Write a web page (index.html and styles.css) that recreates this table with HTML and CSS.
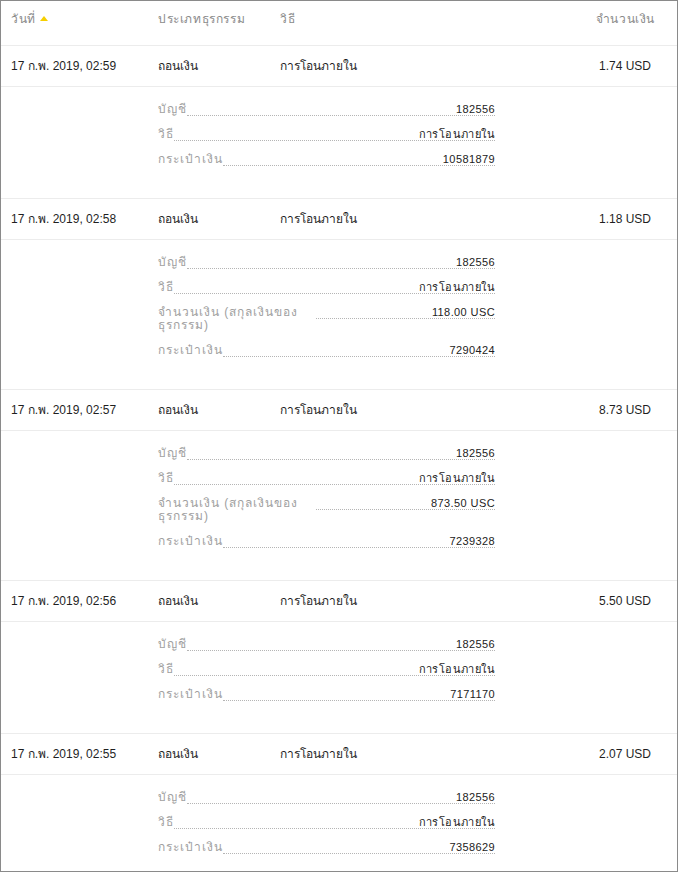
FILE: index.html
```html
<!DOCTYPE html>
<html lang="th">
<head>
<meta charset="utf-8">
<title>ประวัติธุรกรรม</title>
<link rel="stylesheet" href="styles.css">
</head>
<body>
<div class="frame">
  <div class="head">
    <div class="c-date">วันที่<span class="sort"></span></div>
    <div class="c-type">ประเภทธุรกรรม</div>
    <div class="c-method">วิธี</div>
    <div class="c-amount">จำนวนเงิน</div>
  </div>

  <div class="row">
    <div class="c-date">17 ก.พ. 2019, 02:59</div>
    <div class="c-type">ถอนเงิน</div>
    <div class="c-method">การโอนภายใน</div>
    <div class="c-amount">1.74 USD</div>
  </div>
  <div class="detail">
    <div class="list">
      <div class="item"><div class="lbl">บัญชี</div><div class="val">182556</div></div>
      <div class="item"><div class="lbl">วิธี</div><div class="val">การโอนภายใน</div></div>
      <div class="item"><div class="lbl">กระเป๋าเงิน</div><div class="val">10581879</div></div>
    </div>
  </div>

  <div class="row">
    <div class="c-date">17 ก.พ. 2019, 02:58</div>
    <div class="c-type">ถอนเงิน</div>
    <div class="c-method">การโอนภายใน</div>
    <div class="c-amount">1.18 USD</div>
  </div>
  <div class="detail">
    <div class="list">
      <div class="item"><div class="lbl">บัญชี</div><div class="val">182556</div></div>
      <div class="item"><div class="lbl">วิธี</div><div class="val">การโอนภายใน</div></div>
      <div class="item"><div class="lbl wrap">จำนวนเงิน (สกุลเงินของธุรกรรม)</div><div class="val">118.00 USC</div></div>
      <div class="item"><div class="lbl">กระเป๋าเงิน</div><div class="val">7290424</div></div>
    </div>
  </div>

  <div class="row">
    <div class="c-date">17 ก.พ. 2019, 02:57</div>
    <div class="c-type">ถอนเงิน</div>
    <div class="c-method">การโอนภายใน</div>
    <div class="c-amount">8.73 USD</div>
  </div>
  <div class="detail">
    <div class="list">
      <div class="item"><div class="lbl">บัญชี</div><div class="val">182556</div></div>
      <div class="item"><div class="lbl">วิธี</div><div class="val">การโอนภายใน</div></div>
      <div class="item"><div class="lbl wrap">จำนวนเงิน (สกุลเงินของธุรกรรม)</div><div class="val">873.50 USC</div></div>
      <div class="item"><div class="lbl">กระเป๋าเงิน</div><div class="val">7239328</div></div>
    </div>
  </div>

  <div class="row">
    <div class="c-date">17 ก.พ. 2019, 02:56</div>
    <div class="c-type">ถอนเงิน</div>
    <div class="c-method">การโอนภายใน</div>
    <div class="c-amount">5.50 USD</div>
  </div>
  <div class="detail">
    <div class="list">
      <div class="item"><div class="lbl">บัญชี</div><div class="val">182556</div></div>
      <div class="item"><div class="lbl">วิธี</div><div class="val">การโอนภายใน</div></div>
      <div class="item"><div class="lbl">กระเป๋าเงิน</div><div class="val">7171170</div></div>
    </div>
  </div>

  <div class="row">
    <div class="c-date">17 ก.พ. 2019, 02:55</div>
    <div class="c-type">ถอนเงิน</div>
    <div class="c-method">การโอนภายใน</div>
    <div class="c-amount">2.07 USD</div>
  </div>
  <div class="detail">
    <div class="list">
      <div class="item"><div class="lbl">บัญชี</div><div class="val">182556</div></div>
      <div class="item"><div class="lbl">วิธี</div><div class="val">การโอนภายใน</div></div>
      <div class="item"><div class="lbl">กระเป๋าเงิน</div><div class="val">7358629</div></div>
    </div>
  </div>
</div>
</body>
</html>
```

FILE: styles.css
```css
html, body {
  margin: 0;
  padding: 0;
  background: #fff;
}

body {
  font-family: "Liberation Sans", Arial, "DejaVu Sans", sans-serif;
  font-size: 12px;
  color: #1f1f1f;
}

.frame {
  width: 678px;
  height: 872px;
  box-sizing: border-box;
  border: 1px solid #8a8a8a;
  overflow: hidden;
}

.head,
.row {
  display: flex;
  align-items: center;
  box-sizing: border-box;
  padding: 0 26px 0 10px;
  border-bottom: 1px solid #ececec;
  line-height: 14px;
}

.head {
  height: 45px;
  padding-bottom: 9px;
  color: #8a8a8a;
  letter-spacing: 0.6px;
}

.row {
  height: 41px;
  padding-bottom: 1px;
}

.c-date {
  width: 147px;
  display: flex;
  align-items: center;
}

.c-type {
  width: 122px;
}

.c-method {
  flex: 1;
}

.c-amount {
  text-align: right;
}

.head .c-amount {
  margin-right: -4px;
}

.sort {
  display: inline-block;
  width: 0;
  height: 0;
  margin-left: 4px;
  margin-top: -1px;
  border-left: 4px solid transparent;
  border-right: 4px solid transparent;
  border-bottom: 5px solid #f6cf00;
}

.detail {
  padding: 12px 0 32px 157px;
  border-bottom: 1px solid #ececec;
}

.list {
  display: flex;
  flex-direction: column;
  gap: 8px;
  width: 336px;
}

.item {
  display: flex;
  align-items: flex-start;
}

.lbl {
  color: #a0a0a0;
  letter-spacing: 1px;
  line-height: 13px;
  padding: 4px 0 0;
  white-space: nowrap;
}

.lbl.wrap {
  white-space: normal;
  width: 150px;
  flex: none;
  margin-right: 8px;
}

.val {
  flex: 1;
  height: 12px;
  padding-top: 4px;
  line-height: 13px;
  border-bottom: 1px dotted #b5b5b5;
  text-align: right;
  font-size: 11px;
  letter-spacing: 0.4px;
  color: #222;
  margin-right: -1px;
}
```
